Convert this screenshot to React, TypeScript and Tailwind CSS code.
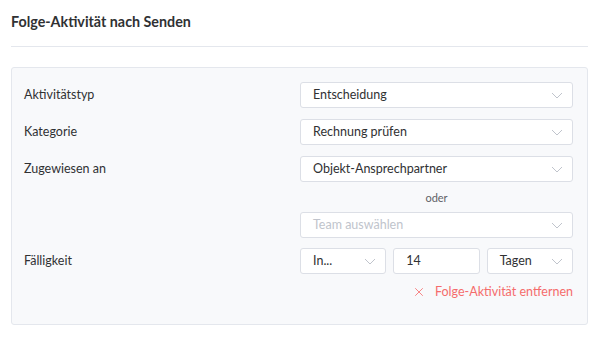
import { X } from 'lucide-react';

function Chevron() {
    return (
        <svg width="12" height="7" viewBox="0 0 12 7" fill="none" className="text-[#c0c4cc]">
            <path d="M1 1l5 5 5-5" stroke="currentColor" strokeWidth="1" />
        </svg>
    );
}

function Select({ value, placeholder, className = '' }: { value?: string; placeholder?: string; className?: string }) {
    return (
        <div className={`h-[26px] flex items-center justify-between bg-white border border-[#dcdfe6] rounded-[3px] pl-3 pr-[9px] ${className}`}>
            <span className={value ? 'text-[#303133]' : 'text-[#c0c4cc]'}>{value ?? placeholder}</span>
            <Chevron />
        </div>
    );
}

function Row({ label, children }: { label: string; children: React.ReactNode }) {
    return (
        <div className="flex items-center">
            <div className="w-[276px] text-[#303133] pt-[1px]">{label}</div>
            <div className="w-[273px]">{children}</div>
        </div>
    );
}

export default function App() {
    return (
        <div className="w-[600px] h-[337px] bg-white text-[12.5px] px-[11px] pt-[12px]" style={{ fontFamily: 'Lato, "Noto Sans", Arial, sans-serif' }}>
            {/* Header */}
            <h2 className="text-[14.3px] font-bold text-[#303133] leading-[20px] pb-[14px] border-b border-[#e4e7ed] mr-[1px]">
                Folge-Aktivität nach Senden
            </h2>

            {/* Panel */}
            <div className="mt-[20px] w-[577px] h-[258px] bg-[#f8f9fb] border border-[#e4e7ed] rounded-[3px] pt-[14px] pl-[12px] pr-[14px]">
                <div className="flex flex-col gap-[11px]">
                    <Row label="Aktivitätstyp">
                        <Select value="Entscheidung" />
                    </Row>
                    <Row label="Kategorie">
                        <Select value="Rechnung prüfen" />
                    </Row>
                    <Row label="Zugewiesen an">
                        <Select value="Objekt-Ansprechpartner" />
                    </Row>
                </div>

                <div className="ml-[276px] w-[273px] text-center text-[11px] text-[#606266] leading-[29px] mt-[1px]">oder</div>

                <div className="ml-[276px] w-[273px]">
                    <Select placeholder="Team auswählen" />
                </div>

                <div className="mt-[10px]">
                    <Row label="Fälligkeit">
                        <div className="grid grid-cols-3 gap-[7px]">
                            <Select value="In..." />
                            <div className="h-[26px] flex items-center bg-white border border-[#dcdfe6] rounded-[3px] px-3 text-[#303133]">14</div>
                            <Select value="Tagen" />
                        </div>
                    </Row>
                </div>

                <div className="flex justify-end items-center gap-[9px] mt-[9px] text-[#f56c6c] w-[549px]">
                    <X size={14} strokeWidth={1.4} />
                    <span>Folge-Aktivität entfernen</span>
                </div>
            </div>
        </div>
    );
}
